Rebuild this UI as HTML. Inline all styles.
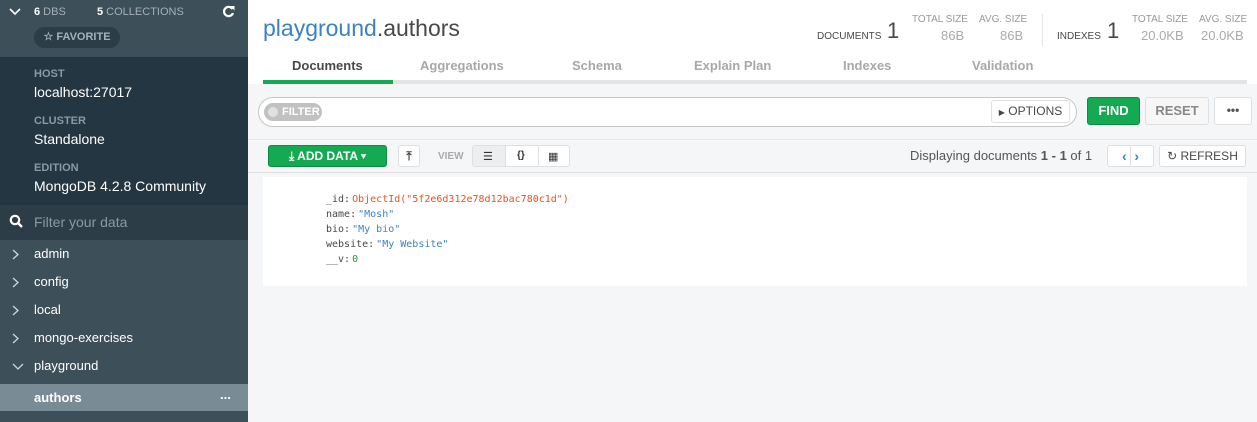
<!DOCTYPE html>
<html><head><style>
*{box-sizing:border-box;margin:0;padding:0}
body{width:1257px;height:422px;overflow:hidden;font-family:"Liberation Sans",sans-serif;background:#f5f6f7;position:relative}
.a{position:absolute}
.sb{left:0;top:0;width:248px;height:422px;background:#3d4f58;color:#fff}
.lbl{font-size:11px;color:#8a9aa3;font-weight:bold}
.val{font-size:14px;color:#fff}
.item{position:absolute;left:0;width:248px;height:28px;font-size:13px;line-height:28px;padding-left:34px;color:#fff}
.chev{position:absolute;left:12px;top:9px}
.tab{position:absolute;top:58px;font-size:13px;font-weight:bold;color:#a8a8a8}
.btn{position:absolute;border:1px solid #dde0e2;background:#f7f7f7;border-radius:3px;font-size:12px;font-weight:bold;color:#888;text-align:center}
.mono{font-family:"DejaVu Sans Mono","Liberation Mono",monospace;font-size:10px;line-height:15px}
.mono span{margin-left:2px}
</style></head><body>
<div class="a sb">
  <div class="a" style="left:0;top:0;width:248px;height:57px;background:#3d4f58"></div>
  <svg class="a" style="left:9px;top:7px" width="12" height="9"><path d="M1 2 L6 7 L11 2" stroke="#fff" stroke-width="1.6" fill="none"/></svg>
  <div class="a" style="left:34px;top:6px;font-size:11px;color:#a4b1b8"><b style="color:#fff">6</b> DBS</div>
  <div class="a" style="left:97px;top:6px;font-size:11px;color:#a4b1b8"><b style="color:#fff">5</b> COLLECTIONS</div>
  <svg class="a" style="left:222px;top:5px" width="13" height="13"><path d="M10.5 4 A4.6 4.6 0 1 0 11 8" stroke="#fff" stroke-width="2.2" fill="none"/><path d="M8 1 L12.5 1 L12.5 5.5 Z" fill="#fff"/></svg>
  <div class="a" style="left:34px;top:27px;width:86px;height:21px;border-radius:11px;background:#2c3d47;color:#a4b1b8;font-size:11px;font-weight:bold;line-height:21px;text-align:center">☆ FAVORITE</div>
  <div class="a" style="left:0;top:57px;width:248px;height:148px;background:#243642"></div>
  <div class="a lbl" style="left:34px;top:68px">HOST</div>
  <div class="a val" style="left:34px;top:84px">localhost:27017</div>
  <div class="a lbl" style="left:34px;top:115px">CLUSTER</div>
  <div class="a val" style="left:34px;top:131px">Standalone</div>
  <div class="a lbl" style="left:34px;top:162px">EDITION</div>
  <div class="a val" style="left:34px;top:178px">MongoDB 4.2.8 Community</div>
  <div class="a" style="left:0;top:205px;width:248px;height:35px;background:#2c3d47"></div>
  <svg class="a" style="left:9px;top:214px" width="14" height="14"><circle cx="6" cy="6" r="4.2" stroke="#fff" stroke-width="2.2" fill="none"/><path d="M9 9 L13 13" stroke="#fff" stroke-width="2.4"/></svg>
  <div class="a" style="left:34px;top:214px;font-size:14px;color:#8a9aa3">Filter your data</div>
  <div class="item" style="top:240px"><svg class="chev" width="8" height="11"><path d="M1 1 L6 5.5 L1 10" stroke="#d0d6da" stroke-width="1.3" fill="none"/></svg>admin</div>
  <div class="item" style="top:268px"><svg class="chev" width="8" height="11"><path d="M1 1 L6 5.5 L1 10" stroke="#d0d6da" stroke-width="1.3" fill="none"/></svg>config</div>
  <div class="item" style="top:296px"><svg class="chev" width="8" height="11"><path d="M1 1 L6 5.5 L1 10" stroke="#d0d6da" stroke-width="1.3" fill="none"/></svg>local</div>
  <div class="item" style="top:324px"><svg class="chev" width="8" height="11"><path d="M1 1 L6 5.5 L1 10" stroke="#d0d6da" stroke-width="1.3" fill="none"/></svg>mongo-exercises</div>
  <div class="item" style="top:352px"><svg class="chev" style="top:11px" width="12" height="8"><path d="M1 1 L6 6 L11 1" stroke="#d0d6da" stroke-width="1.3" fill="none"/></svg>playground</div>
  <div class="item" style="top:384px;height:27px;line-height:27px;background:#798b95;font-weight:bold">authors<span style="position:absolute;left:220px;top:-3px">...</span></div>
</div>
<div class="a" style="left:248px;top:0;width:1009px;height:84px;background:#fff"></div>
<div class="a" style="left:263px;top:15px;font-size:23px;color:#494747"><span style="color:#3b82c4">playground</span>.authors</div>
<div class="a" style="left:817px;top:31px;font-size:10px;color:#494747">DOCUMENTS</div>
<div class="a" style="left:887px;top:18px;font-size:22px;color:#494747">1</div>
<div class="a" style="left:912px;top:14px;font-size:10px;color:#999">TOTAL SIZE</div>
<div class="a" style="left:941px;top:28px;font-size:13px;color:#aaa">86B</div>
<div class="a" style="left:979px;top:14px;font-size:10px;color:#999">AVG. SIZE</div>
<div class="a" style="left:1000px;top:28px;font-size:13px;color:#aaa">86B</div>
<div class="a" style="left:1042px;top:14px;width:1px;height:32px;background:#e4e4e4"></div>
<div class="a" style="left:1057px;top:31px;font-size:10px;color:#494747">INDEXES</div>
<div class="a" style="left:1107px;top:18px;font-size:22px;color:#494747">1</div>
<div class="a" style="left:1132px;top:14px;font-size:10px;color:#999">TOTAL SIZE</div>
<div class="a" style="left:1141px;top:28px;font-size:13px;color:#aaa">20.0KB</div>
<div class="a" style="left:1199px;top:14px;font-size:10px;color:#999">AVG. SIZE</div>
<div class="a" style="left:1201px;top:28px;font-size:13px;color:#aaa">20.0KB</div>
<div class="tab" style="left:292px;color:#494747">Documents</div>
<div class="tab" style="left:420px">Aggregations</div>
<div class="tab" style="left:572px">Schema</div>
<div class="tab" style="left:694px">Explain Plan</div>
<div class="tab" style="left:843px">Indexes</div>
<div class="tab" style="left:972px">Validation</div>
<div class="a" style="left:263px;top:80px;width:984px;height:4px;background:#e4e4e4"></div>
<div class="a" style="left:263px;top:80px;width:130px;height:4px;background:#13aa52"></div>
<div class="a" style="left:258px;top:97px;width:819px;height:30px;border:1px solid #c6c6c6;border-radius:15px;background:#fff"></div>
<div class="a" style="left:264px;top:103px;width:58px;height:18px;border-radius:9px;background:#c1c1c1;color:#fff;font-size:11px;font-weight:bold;line-height:18px;padding-left:18px">FILTER</div>
<div class="a" style="left:268px;top:107px;width:10px;height:10px;border-radius:50%;background:#e0e0e0"></div>
<div class="btn" style="left:991px;top:100px;width:79px;height:23px;line-height:21px;font-weight:normal;color:#494747;background:#fff"><span style="font-size:8px">▶</span> OPTIONS</div>
<div class="btn" style="left:1087px;top:97px;width:53px;height:28px;line-height:26px;background:#13aa52;border-color:#0f8c43;color:#fff;font-size:13px">FIND</div>
<div class="btn" style="left:1145px;top:97px;width:64px;height:28px;line-height:26px;color:#888;font-size:13px">RESET</div>
<div class="btn" style="left:1214px;top:97px;width:38px;height:28px;line-height:24px;color:#555;background:#fff">•••</div>
<div class="a" style="left:248px;top:139px;width:1009px;height:1px;background:#e6e6e6"></div>
<div class="btn" style="left:268px;top:145px;width:119px;height:22px;line-height:21px;background:#13aa52;border-color:#0f8c43;color:#fff">⤓ ADD DATA ▾</div>
<div class="btn" style="left:398px;top:145px;width:22px;height:22px;line-height:20px;color:#444;background:#fff">⤒</div>
<div class="a" style="left:438px;top:151px;font-size:10px;font-weight:bold;color:#aaa">VIEW</div>
<div class="btn" style="left:472px;top:145px;width:98px;height:22px;background:#fff"></div>
<div class="a" style="left:473px;top:146px;width:33px;height:20px;background:#eceeef;border-right:1px solid #dde0e2"></div>
<div class="a" style="left:483px;top:150px;font-size:11px;color:#333">☰</div>
<div class="a" style="left:517px;top:150px;font-size:10px;color:#333;font-weight:bold">{}</div>
<div class="a" style="left:538px;top:146px;width:1px;height:20px;background:#dde0e2"></div>
<div class="a" style="left:548px;top:150px;font-size:11px;color:#333">▦</div>
<div class="a" style="left:910px;top:148px;font-size:13px;color:#555">Displaying documents <b>1 - 1</b> of 1</div>
<div class="btn" style="left:1107px;top:145px;width:47px;height:22px;background:#fff;color:#3b82c4;line-height:20px;font-size:14px">‹ &nbsp;›</div>
<div class="a" style="left:1130px;top:146px;width:1px;height:20px;background:#dde0e2"></div>
<div class="btn" style="left:1159px;top:145px;width:87px;height:22px;line-height:20px;color:#494747;background:#fff;font-weight:normal">↻ REFRESH</div>
<div class="a" style="left:248px;top:172px;width:1009px;height:1px;background:#e0e0e0"></div>
<div class="a" style="left:263px;top:177px;width:984px;height:109px;background:#fff"></div>
<div class="a mono" style="left:326px;top:192px;color:#494747">
<div>_id:<span style="color:#e8521c">ObjectId("5f2e6d312e78d12bac780c1d")</span></div>
<div>name:<span style="color:#3b82c4">"Mosh"</span></div>
<div>bio:<span style="color:#3b82c4">"My bio"</span></div>
<div>website:<span style="color:#3b82c4">"My Website"</span></div>
<div>__v:<span style="color:#2d8a46">0</span></div>
</div>
</body></html>
